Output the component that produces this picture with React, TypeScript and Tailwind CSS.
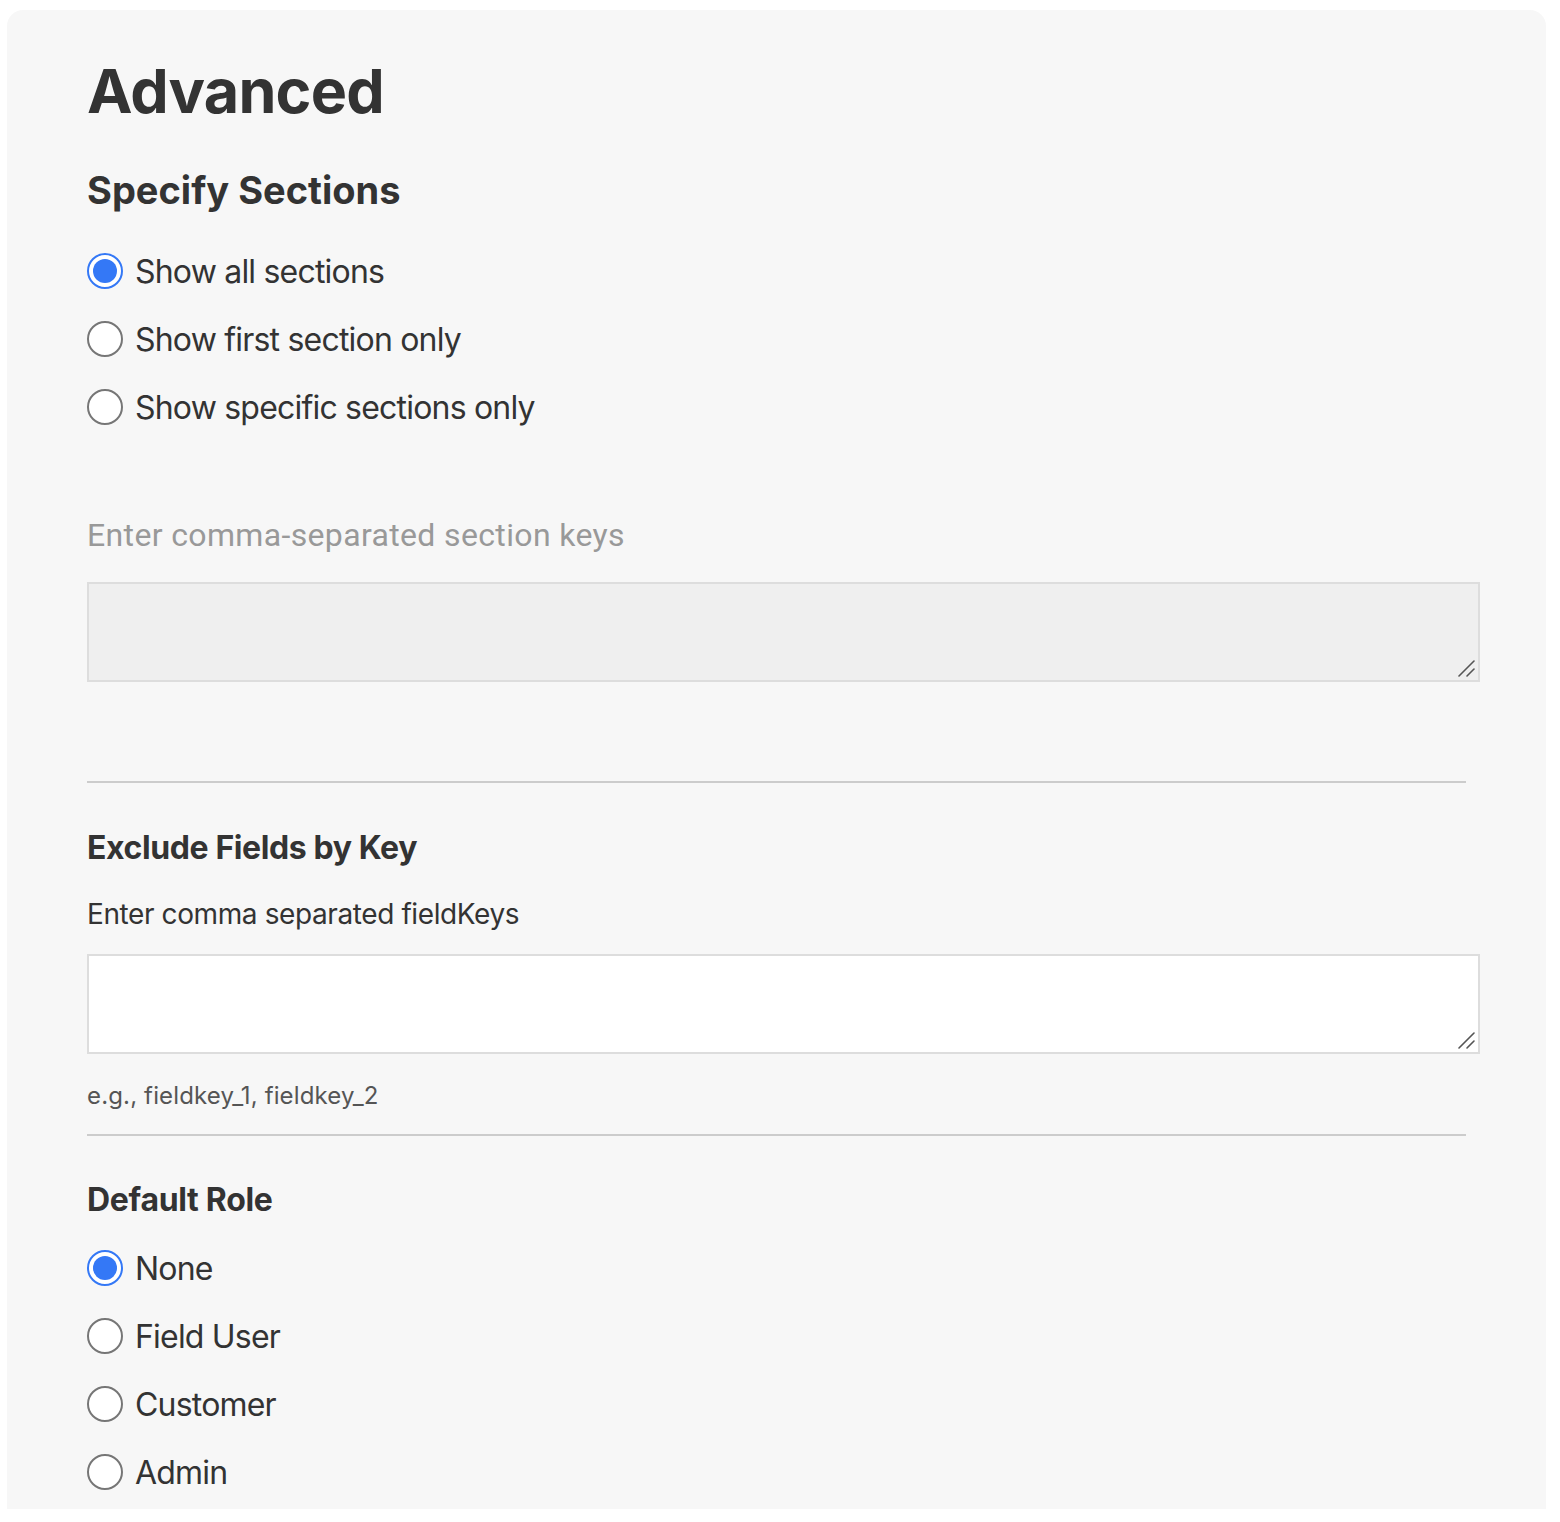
import React from 'react'

const sectionOptions = ['Show all sections', 'Show first section only', 'Show specific sections only']
const roleOptions = ['None', 'Field User', 'Customer', 'Admin']

function Radio({ label, checked, onSelect }: { label: string; checked: boolean; onSelect: () => void }) {
  return (
    <label className="flex h-[68px] cursor-pointer items-center gap-[12px]" onClick={onSelect}>
      {checked ? (
        <span className="flex h-[36px] w-[36px] items-center justify-center rounded-full border-2 border-[#3478f6] bg-white">
          <span className="h-[24px] w-[24px] rounded-full bg-[#3478f6]" />
        </span>
      ) : (
        <span className="h-[36px] w-[36px] rounded-full border-2 border-[#767676] bg-white" />
      )}
      <span className="text-[32px] leading-[39px] tracking-[-0.8px] text-[#333333]">{label}</span>
    </label>
  )
}

// resize grip, drawn like the retina one in the screenshot
function Grip() {
  return (
    <svg
      className="pointer-events-none absolute bottom-[2px] right-[2px]"
      width="20"
      height="20"
      viewBox="0 0 20 20"
    >
      <path d="M1 16 L16 1" stroke="#555" strokeWidth="1.6" strokeLinecap="round" />
      <path d="M9 16 L16 9" stroke="#555" strokeWidth="1.6" strokeLinecap="round" />
    </svg>
  )
}

export default function App() {
  const [section, setSection] = React.useState(0)
  const [role, setRole] = React.useState(0)

  return (
    <div className="min-h-[1522px] bg-white pt-[10px] font-['Inter',sans-serif]">
      <div className="ml-[7px] w-[1539px] rounded-t-[16px] bg-[#f7f7f7] pb-[3px] pl-[80px] pr-[80px] pt-[42px]">
        <h1 className="text-[61px] font-bold leading-[78px] tracking-[-0.8px] text-[#333333]">Advanced</h1>

        {/* Specify sections */}
        <h2 className="mt-[37px] text-[38px] font-bold leading-[46px] text-[#333333]">Specify Sections</h2>
        <div className="mt-[24px] flex flex-col">
          {sectionOptions.map((opt, i) => (
            <Radio key={opt} label={opt} checked={section === i} onSelect={() => setSection(i)} />
          ))}
        </div>

        <p className="mt-[76px] font-['Roboto',sans-serif] text-[32px] leading-[36px] tracking-[0.35px] text-[#999999]">
          Enter comma-separated section keys
        </p>
        <div className="relative mt-[29px] w-[1393px]">
          <textarea
            disabled
            className="block h-[100px] w-full resize-none border-2 border-[#dddddd] bg-[#efefef]"
          />
          <Grip />
        </div>

        <hr className="mt-[99px] border-t-2 border-[#cccccc]" />

        {/* Exclude fields */}
        <h3 className="mt-[45px] text-[32px] font-bold leading-[39px] tracking-[-0.4px] text-[#333333]">
          Exclude Fields by Key
        </h3>
        <p className="mt-[30px] text-[28px] leading-[34px] tracking-[-0.4px] text-[#333333]">
          Enter comma separated fieldKeys
        </p>
        <div className="relative mt-[23px] w-[1393px]">
          <textarea className="block h-[100px] w-full resize-none border-2 border-[#dddddd] bg-white outline-none" />
          <Grip />
        </div>
        <p className="mt-[27px] text-[24px] leading-[29px] tracking-[0.15px] text-[#555555]">
          e.g., fieldkey_1, fieldkey_2
        </p>

        <hr className="mt-[24px] border-t-2 border-[#cccccc]" />

        {/* Default role */}
        <h3 className="mt-[44px] text-[32px] font-bold leading-[39px] tracking-[-0.3px] text-[#333333]">
          Default Role
        </h3>
        <div className="mt-[15px] flex flex-col">
          {roleOptions.map((opt, i) => (
            <Radio key={opt} label={opt} checked={role === i} onSelect={() => setRole(i)} />
          ))}
        </div>
      </div>
    </div>
  )
}
